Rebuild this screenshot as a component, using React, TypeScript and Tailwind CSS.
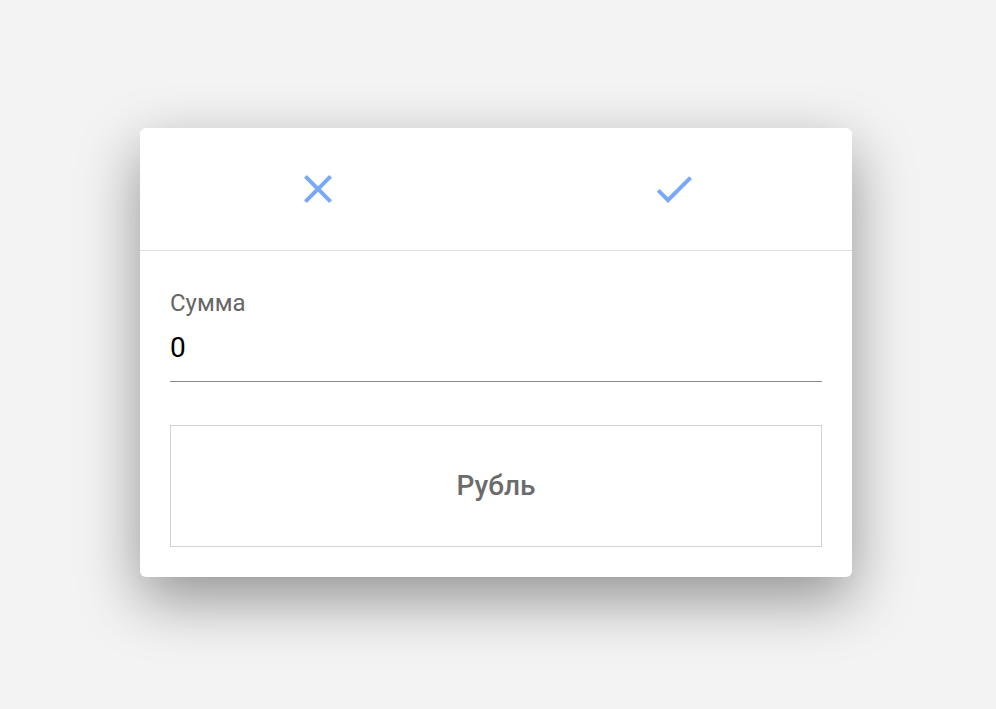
import React from "react";

export default function App() {
  return (
    <div className="min-h-[709px] w-full bg-[#f3f3f3] flex items-center justify-center" style={{ fontFamily: "Roboto, 'Noto Sans', sans-serif" }}>
      <div className="w-[712px] bg-white rounded-[6px] shadow-[0_22px_60px_rgba(0,0,0,0.4)] -mt-[4px] -ml-[4px]">
        <div className="flex h-[123px] border-b border-[#e0e0e0]">
          <button className="flex-1 flex items-center justify-center">
            <svg width="48" height="48" viewBox="0 0 24 24" fill="#78a8fa">
              <path d="M19 6.41L17.59 5 12 10.59 6.41 5 5 6.41 10.59 12 5 17.59 6.41 19 12 13.41 17.59 19 19 17.59 13.41 12z" />
            </svg>
          </button>
          <button className="flex-1 flex items-center justify-center">
            <svg width="48" height="48" viewBox="0 0 24 24" fill="#78a8fa">
              <path d="M9 16.17L4.83 12l-1.42 1.41L9 19 21 7l-1.41-1.41z" />
            </svg>
          </button>
        </div>
        <div className="px-[30px] pt-[38px] pb-[30px]">
          <div className="border-b border-[#8c8c8c]">
            <div className="text-[24px] leading-[28px] text-[#666666]">Сумма</div>
            <div className="text-[28px] leading-[32px] text-black pt-[15px] pb-[17px]">0</div>
          </div>
          <button className="mt-[43px] w-full h-[122px] border border-[#d0d4d8] flex items-center justify-center text-[28px] font-medium text-[#6b6b6b]">
            Рубль
          </button>
        </div>
      </div>
    </div>
  );
}
